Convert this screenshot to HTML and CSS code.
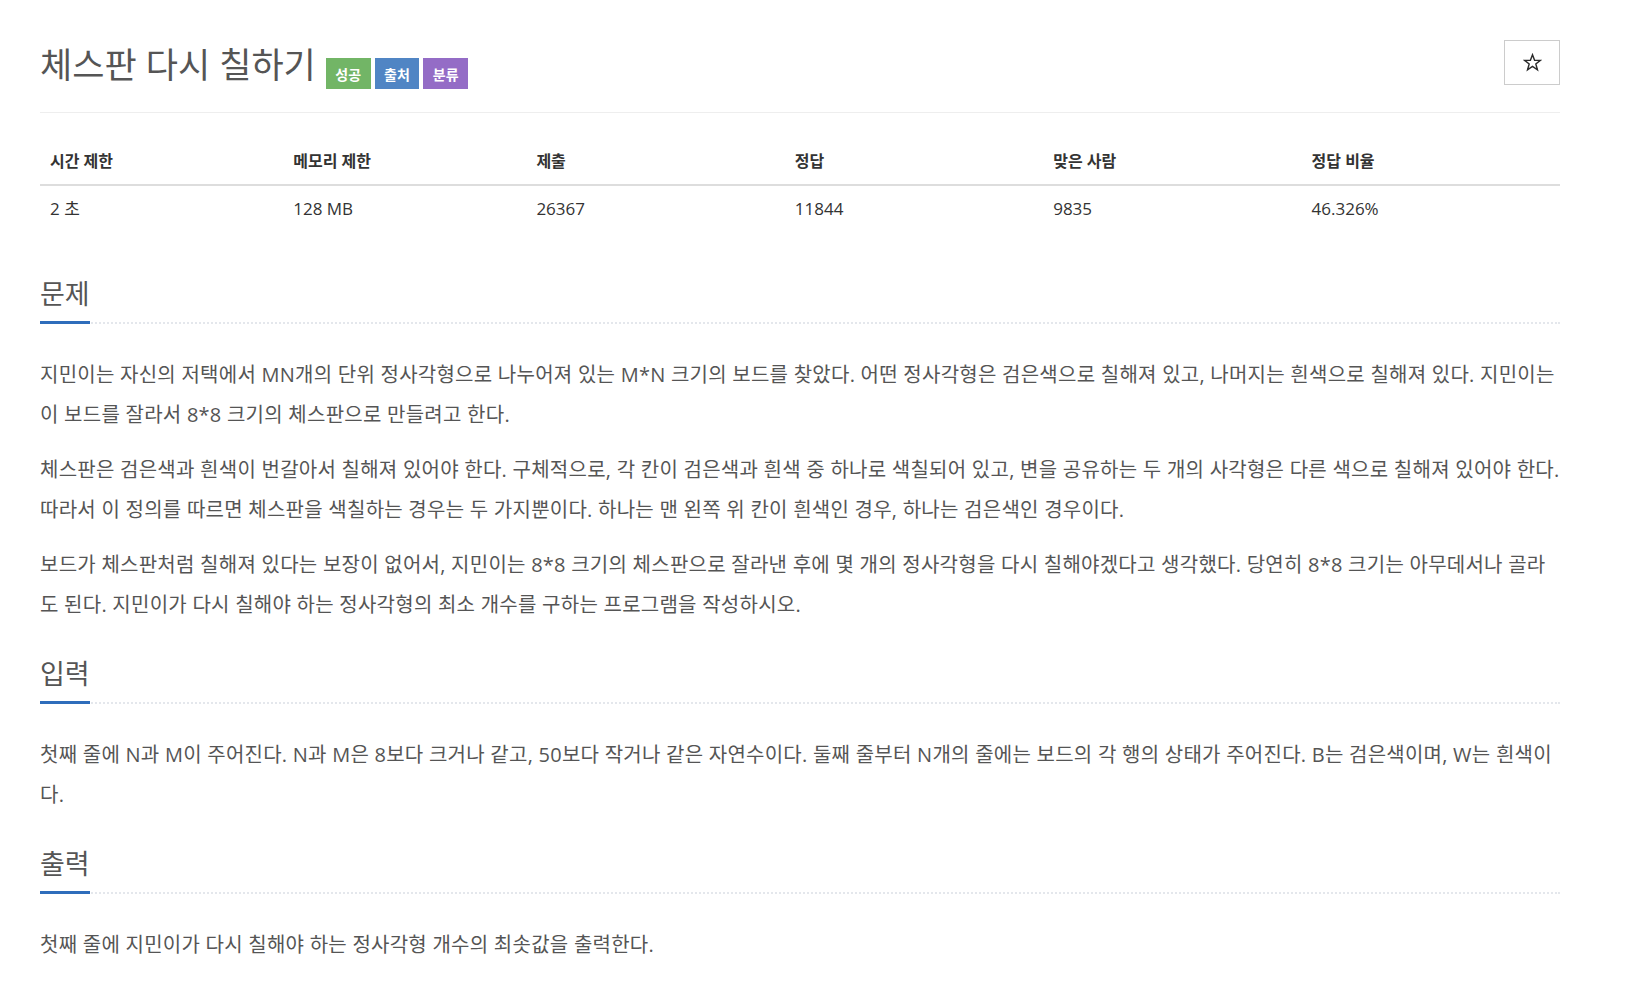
FILE: index.html
```html
<!DOCTYPE html>
<html lang="ko">
<head>
<meta charset="utf-8">
<title>체스판 다시 칠하기</title>
<link rel="stylesheet" href="styles.css">
</head>
<body>
<div class="container">
  <div class="page-header">
    <div class="title-wrap">
      <h1 class="title">체스판 다시 칠하기</h1>
      <div class="labels">
        <span class="label label-success">성공</span>
        <span class="label label-primary">출처</span>
        <span class="label label-purple">분류</span>
      </div>
    </div>
    <button class="star-btn" type="button" aria-label="즐겨찾기">
      <svg class="star-icon" viewBox="0 0 20 20" width="19" height="19" aria-hidden="true">
        <polygon points="10,1.8 12.2,7.6 18.3,7.8 13.5,11.6 15.2,17.6 10,14.1 4.8,17.6 6.5,11.6 1.7,7.8 7.8,7.6" />
      </svg>
    </button>
  </div>

  <table class="info-table">
    <thead>
      <tr>
        <th class="w16">시간 제한</th>
        <th class="w16">메모리 제한</th>
        <th class="w17">제출</th>
        <th class="w17">정답</th>
        <th class="w17">맞은 사람</th>
        <th class="w17">정답 비율</th>
      </tr>
    </thead>
    <tbody>
      <tr>
        <td>2 초</td>
        <td>128 MB</td>
        <td>26367</td>
        <td>11844</td>
        <td>9835</td>
        <td>46.326%</td>
      </tr>
    </tbody>
  </table>

  <section class="problem-section first">
    <div class="headline"><h2>문제</h2></div>
    <div class="problem-text">
      <p>지민이는 자신의 저택에서 MN개의 단위 정사각형으로 나누어져 있는 M*N 크기의 보드를 찾았다. 어떤 정사각형은 검은색으로 칠해져 있고, 나머지는 흰색으로 칠해져 있다. 지민이는 이 보드를 잘라서 8*8 크기의 체스판으로 만들려고 한다.</p>
      <p>체스판은 검은색과 흰색이 번갈아서 칠해져 있어야 한다. 구체적으로, 각 칸이 검은색과 흰색 중 하나로 색칠되어 있고, 변을 공유하는 두 개의 사각형은 다른 색으로 칠해져 있어야 한다. 따라서 이 정의를 따르면 체스판을 색칠하는 경우는 두 가지뿐이다. 하나는 맨 왼쪽 위 칸이 흰색인 경우, 하나는 검은색인 경우이다.</p>
      <p>보드가 체스판처럼 칠해져 있다는 보장이 없어서, 지민이는 8*8 크기의 체스판으로 잘라낸 후에 몇 개의 정사각형을 다시 칠해야겠다고 생각했다. 당연히 8*8 크기는 아무데서나 골라도 된다. 지민이가 다시 칠해야 하는 정사각형의 최소 개수를 구하는 프로그램을 작성하시오.</p>
    </div>
  </section>

  <section class="problem-section">
    <div class="headline"><h2>입력</h2></div>
    <div class="problem-text">
      <p>첫째 줄에 N과 M이 주어진다. N과 M은 8보다 크거나 같고, 50보다 작거나 같은 자연수이다. 둘째 줄부터 N개의 줄에는 보드의 각 행의 상태가 주어진다. B는 검은색이며, W는 흰색이다.</p>
    </div>
  </section>

  <section class="problem-section">
    <div class="headline"><h2>출력</h2></div>
    <div class="problem-text">
      <p>첫째 줄에 지민이가 다시 칠해야 하는 정사각형 개수의 최솟값을 출력한다.</p>
    </div>
  </section>
</div>
</body>
</html>
```

FILE: styles.css
```css
html, body {
  margin: 0;
  padding: 0;
  background: #fff;
}

body {
  font-family: "Open Sans", "Noto Sans CJK KR", sans-serif;
  color: #555;
}

.container {
  display: flex;
  flex-direction: column;
  padding: 40px 72px 0 40px;
}

.page-header {
  display: flex;
  justify-content: space-between;
  align-items: flex-start;
  border-bottom: 1px solid #eee;
}

.title-wrap {
  display: flex;
  align-items: flex-start;
}

.title {
  margin: 5px 0 27px 0;
  font-size: 35px;
  line-height: 40px;
  font-weight: 400;
  color: #555;
}

.labels {
  display: flex;
  gap: 4px;
  margin: 18px 0 0 10px;
}

.label {
  display: inline-flex;
  align-items: center;
  justify-content: center;
  height: 31px;
  padding: 0 9.5px;
  font-size: 14px;
  font-weight: 700;
  color: #fff;
}

.label-success { background: #72b566; }
.label-primary { background: #5085c4; }
.label-purple { background: #946cc6; }

.star-btn {
  display: flex;
  align-items: center;
  justify-content: center;
  width: 56px;
  height: 45px;
  border: 1px solid #ccc;
  background: #fff;
  padding: 0;
}

.star-icon polygon {
  fill: none;
  stroke: #2b2b2b;
  stroke-width: 1.5;
  stroke-linejoin: miter;
}

.info-table {
  width: 100%;
  border-collapse: collapse;
  margin: 25px 0 0 0;
  color: #333;
}

.info-table th,
.info-table td {
  text-align: left;
  padding: 8px 10px;
  line-height: 30px;
}

.info-table th {
  font-size: 16px;
  font-weight: 700;
  border-bottom: 2px solid #ddd;
}

.info-table td {
  font-size: 17px;
}

.w16 { width: 16%; }
.w17 { width: 17%; }

.problem-section {
  margin-top: 21px;
}

.problem-section.first {
  margin-top: 49px;
}

.headline {
  border-bottom: 2px dotted #e4e7ec;
}

.headline h2 {
  display: inline-block;
  margin: 0 0 -2px 0;
  padding: 0 0 14px 0;
  font-size: 27px;
  line-height: 26px;
  font-weight: 400;
  color: #555;
  border-bottom: 3px solid #2e6dbb;
}

.problem-text {
  display: flow-root;
  padding-top: 31px;
  font-size: 20px;
  line-height: 2;
  letter-spacing: 0.25px;
}

.problem-text p {
  margin: 0 0 15px 0;
}
```
